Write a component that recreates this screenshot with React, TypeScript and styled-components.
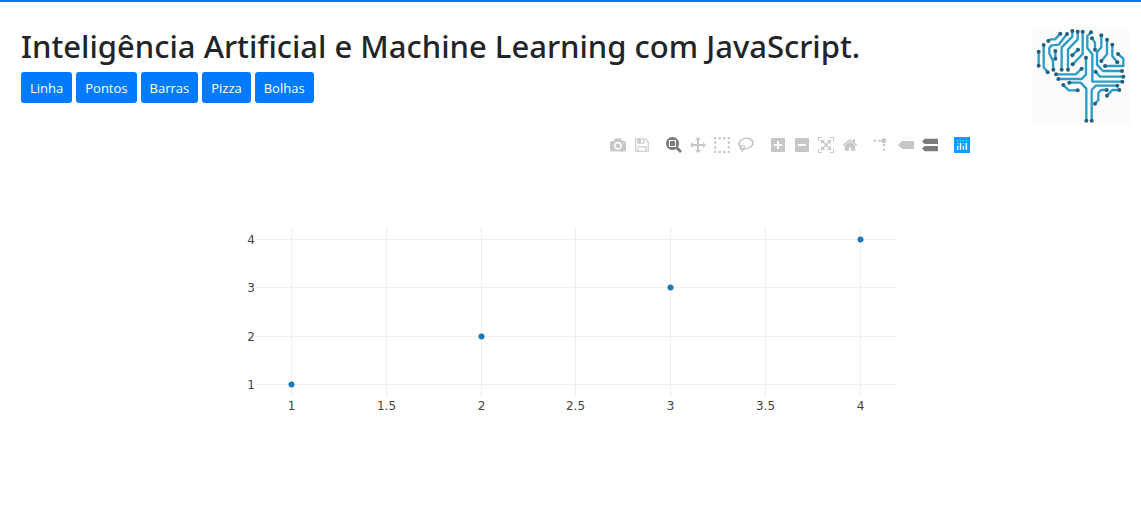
import React from "react";
import styled, { createGlobalStyle } from "styled-components";

const GlobalStyle = createGlobalStyle`
  *, *::before, *::after { box-sizing: border-box; }
  body {
    margin: 0;
    background: #fff;
    color: #212529;
    font-family: "Segoe UI", "Open Sans", "Noto Sans", sans-serif;
    font-variant-ligatures: none;
    border-top: 2px solid #007bff;
  }
`;

const Page = styled.div`
  padding: 25px 10px 0 21px;
`;

const Header = styled.header`
  display: flex;
  justify-content: space-between;
  align-items: flex-start;
  padding-right: 1px;
`;

const Title = styled.h1`
  margin: 0 0 6px;
  font-family: "Segoe UI", "Noto Sans", sans-serif;
  font-size: 31px;
  line-height: 39px;
  font-weight: 500;
`;

const ButtonRow = styled.nav`
  display: flex;
  gap: 4px;
`;

const ChartButton = styled.button`
  height: 31px;
  padding: 2px 9px 0;
  border: 0;
  border-radius: 3px;
  background: #007bff;
  color: #fff;
  font-family: inherit;
  font-size: 13px;
  line-height: 21px;
  cursor: pointer;
`;

const Logo = styled.svg`
  display: block;
  flex: none;
  width: 98px;
  height: 99px;
`;

const Figure = styled.section`
  max-width: 800px;
  margin: 8px auto 0;
`;

const ModeBar = styled.div`
  display: flex;
  justify-content: flex-end;
  gap: 8px;
  padding-right: 2px;
`;

const ModeGroup = styled.div`
  display: flex;
`;

const ModeButton = styled.button<{ $active?: boolean }>`
  display: flex;
  padding: 3px 4px;
  border: 0;
  background: transparent;
  color: ${(p) => (p.$active ? "#7b7b7e" : "#c7c7c7")};
  cursor: pointer;
`;

const Icon = styled.svg`
  display: block;
  width: 16px;
  height: 16px;
  fill: currentColor;
`;

const Plot = styled.svg`
  display: block;
  width: 100%;
  height: auto;
  text {
    font-family: Verdana, "DejaVu Sans", sans-serif;
    font-size: 12px;
    fill: #444;
  }
`;

type Glyph = { label: string; path: string; w?: number; active?: boolean; transform?: string };

const groups: Glyph[][] = [
  [
    {
      label: "Download plot as a png",
      path: "m500 450c-83 0-150-67-150-150 0-83 67-150 150-150 83 0 150 67 150 150 0 83-67 150-150 150z m400 150h-120c-16 0-34 13-39 29l-31 93c-6 15-23 28-40 28h-340c-16 0-34-13-39-28l-31-94c-6-15-23-28-40-28h-120c-55 0-100-45-100-100v-450c0-55 45-100 100-100h800c55 0 100 45 100 100v450c0 55-45 100-100 100z m-400-550c-138 0-250 112-250 250 0 138 112 250 250 250 138 0 250-112 250-250 0-138-112-250-250-250z m365 380c-19 0-35 16-35 35 0 19 16 35 35 35 19 0 35-16 35-35 0-19-16-35-35-35z",
    },
    {
      label: "Edit in Chart Studio",
      w: 857,
      path: "m214-7h429v214h-429v-214z m500 0h72v500q0 8-6 21t-11 20l-157 156q-5 6-19 12t-22 5v-232q0-22-15-38t-38-16h-322q-22 0-37 16t-16 38v232h-72v-714h72v232q0 22 16 38t37 16h465q22 0 38-16t15-38v-232z m-214 518v178q0 8-5 13t-13 5h-107q-7 0-13-5t-5-13v-178q0-8 5-13t13-5h107q7 0 13 5t5 13z m357-18v-518q0-22-15-38t-38-16h-750q-23 0-38 16t-16 38v750q0 22 16 38t38 16h517q23 0 50-12t42-26l156-157q16-15 27-42t11-49z",
    },
  ],
  [
    {
      label: "Zoom",
      active: true,
      path: "m1000-25l-250 251c40 63 63 138 63 218 0 224-182 406-407 406-224 0-406-182-406-406s183-406 407-406c80 0 155 22 218 62l250-250 125 125z m-812 250l0 438 437 0 0-438-437 0z m62 375l313 0 0-312-313 0 0 312z",
    },
    {
      label: "Pan",
      path: "m1000 350l-187 188 0-125-250 0 0 250 125 0-188 187-187-187 125 0 0-250-250 0 0 125-188-188 186-187 0 125 252 0 0-250-125 0 187-188 188 188-125 0 0 250 250 0 0-126 187 188z",
    },
    {
      label: "Box Select",
      path: "m0 850l0-143 143 0 0 143-143 0z m286 0l0-143 143 0 0 143-143 0z m285 0l0-143 143 0 0 143-143 0z m286 0l0-143 143 0 0 143-143 0z m-857-286l0-143 143 0 0 143-143 0z m857 0l0-143 143 0 0 143-143 0z m-857-285l0-143 143 0 0 143-143 0z m857 0l0-143 143 0 0 143-143 0z m-857-286l0-143 143 0 0 143-143 0z m286 0l0-143 143 0 0 143-143 0z m285 0l0-143 143 0 0 143-143 0z m286 0l0-143 143 0 0 143-143 0z",
    },
    {
      label: "Lasso Select",
      w: 1031,
      path: "m1018 538c-36 207-290 336-568 286-277-48-473-256-436-463 10-57 36-108 76-151-13-66 11-137 68-183 34-28 75-41 114-42l-55-70 0 0c-2-1-3-2-4-3-10-14-8-34 5-45 14-11 34-8 45 4 1 1 2 3 2 5l0 0 113 140c16 11 31 24 45 40 4 3 6 7 8 11 48-3 100 0 151 9 278 48 473 255 436 462z m-624-379c-80 14-149 48-197 96 42 42 109 47 156 9 33-26 47-66 41-105z m-187-74c-19 16-33 37-39 60 50-32 109-55 174-68-42-25-95-24-135 8z m360 75c-34-7-69-9-102-8 8 62-16 128-68 170-73 59-175 54-244-5-9 20-16 40-20 61-28 159 121 317 333 354s407-60 434-217c28-159-121-318-333-355z",
    },
  ],
  [
    {
      label: "Zoom in",
      w: 875,
      path: "m1 787l0-875 875 0 0 875-875 0z m687-500l-187 0 0-187-125 0 0 187-188 0 0 125 188 0 0 187 125 0 0-187 187 0 0-125z",
    },
    {
      label: "Zoom out",
      w: 875,
      path: "m0 788l0-876 875 0 0 876-875 0z m688-500l-500 0 0 125 500 0 0-125z",
    },
    {
      label: "Autoscale",
      path: "m250 850l-187 0-63 0 0-62 0-188 63 0 0 188 187 0 0 62z m688 0l-188 0 0-62 188 0 0-188 62 0 0 188 0 62-62 0z m-875-938l0 188-63 0 0-188 0-62 63 0 187 0 0 62-187 0z m875 188l0-188-188 0 0-62 188 0 62 0 0 62 0 188-62 0z m-125 188l-1 0-93-94-156 156 156 156 92-93 2 0 0 250-250 0 0-2 93-92-156-156-156 156 94 92 0 2-250 0 0-250 0 0 93 93 157-156-157-156-93 94 0 0 0-250 250 0 0 0-94 93 156 157 156-157-93-93 0 0 250 0 0 250z",
    },
    {
      label: "Reset axes",
      w: 928,
      path: "m786 296v-267q0-15-11-26t-25-10h-214v214h-143v-214h-214q-15 0-25 10t-11 26v267q0 1 0 2t0 2l321 264 321-264q1-1 1-4z m124 39l-34-41q-5-5-12-6h-2q-7 0-12 3l-386 322-386-322q-7-4-13-4-7 2-12 7l-35 41q-4 5-3 13t6 12l401 334q18 15 42 15t43-15l136-114v109q0 8 5 13t13 5h107q8 0 13-5t5-13v-227l122-102q5-5 6-12t-4-13z",
    },
  ],
  [
    {
      label: "Toggle Spike Lines",
      transform: "matrix(1.5 0 0 -1.5 0 850)",
      path: "M512 409c0-57-46-104-103-104-57 0-104 47-104 104 0 57 47 103 104 103 57 0 103-46 103-103z m-327-39l92 0 0 92-92 0z m-185 0l92 0 0 92-92 0z m370-186l92 0 0 93-92 0z m0-184l92 0 0 92-92 0z",
    },
    {
      label: "Show closest data on hover",
      w: 1500,
      path: "m375 725l0 0-375-375 375-374 0-1 1125 0 0 750-1125 0z",
    },
    {
      label: "Compare data on hover",
      w: 1125,
      active: true,
      path: "m187 786l0 2-187-188 188-187 0 0 937 0 0 373-938 0z m0-499l0 1-187-188 188-188 0 0 937 0 0 376-938-1z",
    },
  ],
];

// Circuit lines of the brain; each one starts and ends at a round node.
const traces = [
  "41,95 41,137",
  "56,75 56,142 68,157",
  "70,63 76,58 90,58 106,41",
  "126,42 101,74 80,76 73,84 73,100 84,124 85,149",
  "91,93 91,116",
  "142,33 142,50 110,82 110,149",
  "158,35 158,58 129,88 129,149",
  "159,89 142,106",
  "173,35 173,102 143,133",
  "198,37 187,48 187,84 202,103 202,185 292,185",
  "201,55 210,68 210,89",
  "229,46 229,82 216,97 216,134 234,153 291,153",
  "246,59 246,103 229,123",
  "262,74 262,108 277,127",
  "279,102 295,116 295,138 240,138",
  "212,155 225,170 295,170",
  "183,113 183,163 170,177 100,177",
  "170,146 152,163 93,163",
  "115,195 131,211 158,211",
  "133,188 167,188 184,206 184,302",
  "277,197 212,197 200,210 200,302",
  "283,210 262,210 246,227",
  "245,210 228,210 220,219 220,240 210,251",
];

const BrainLogo = () => (
  <Logo viewBox="21 21 294 297" role="img" aria-label="Cérebro eletrônico">
    <defs>
      <pattern id="hatch" width="12" height="12" patternUnits="userSpaceOnUse">
        <path d="M-3 3L3-3M0 12L12 0M9 15L15 9" stroke="#f6f6f6" strokeWidth="2" />
      </pattern>
    </defs>
    <rect x="21" y="21" width="294" height="297" fill="#fdfdfd" />
    <rect x="21" y="21" width="294" height="297" fill="url(#hatch)" />
    {traces.map((t) => (
      <polyline key={t} points={t} fill="none" stroke="#2b9cc6" strokeWidth="7" strokeLinejoin="round" />
    ))}
    {traces.map((t) => {
      const pts = t.split(" ").map((p) => p.split(",").map(Number));
      return [pts[0], pts[pts.length - 1]].map(([x, y]) => (
        <circle key={`${x}-${y}`} cx={x} cy={y} r="6" fill="#23607f" />
      ));
    })}
  </Logo>
);

const points = [1, 2, 3, 4];
const xTicks = [1, 1.5, 2, 2.5, 3, 3.5, 4];
const xAt = (v: number) => Math.round(115.9 + (v - 1) * 189.6);
const yAt = (v: number) => Math.round(229.2 - (v - 1) * 48.5);

const ScatterPlot = () => (
  <Plot viewBox="0 0 800 321" role="img" aria-label="Gráfico de pontos">
    {xTicks.map((v) => (
      <g key={v}>
        <rect x={xAt(v) - 1} y="71" width="1" height="170" fill="#eee" />
        <text x={xAt(v) - 0.5} y="254" textAnchor="middle">{v}</text>
      </g>
    ))}
    {points.map((v) => (
      <g key={v}>
        <rect x="80" y={yAt(v) - 1} width="640" height="1" fill="#eee" />
        <text x="79" y={yAt(v) + 4} textAnchor="end">{v}</text>
      </g>
    ))}
    {points.map((v) => (
      <circle key={v} cx={xAt(v) - 0.5} cy={yAt(v) - 0.5} r="3" fill="#1f77b4" />
    ))}
  </Plot>
);

const charts = ["Linha", "Pontos", "Barras", "Pizza", "Bolhas"];

export default function App() {
  return (
    <>
      <GlobalStyle />
      <Page>
        <Header>
          <div>
            <Title>Inteligência Artificial e Machine Learning com JavaScript.</Title>
            <ButtonRow>
              {charts.map((c) => (
                <ChartButton key={c} type="button">{c}</ChartButton>
              ))}
            </ButtonRow>
          </div>
          <BrainLogo />
        </Header>
        <Figure>
          <ModeBar>
            {groups.map((g, i) => (
              <ModeGroup key={i}>
                {g.map((b) => (
                  <ModeButton key={b.label} type="button" aria-label={b.label} $active={b.active}>
                    <Icon viewBox={`0 0 ${b.w ?? 1000} 1000`}>
                      <path d={b.path} transform={b.transform ?? "matrix(1 0 0 -1 0 850)"} />
                    </Icon>
                  </ModeButton>
                ))}
              </ModeGroup>
            ))}
            <ModeGroup>
              <ModeButton type="button" aria-label="Produced with Plotly">
                <Icon viewBox="0 0 132 132">
                  <rect width="132" height="132" fill="#119dff" />
                  <g fill="#25fefd">
                    {[[30, 30], [54, 30], [78, 30], [102, 30], [30, 54], [78, 54]].map(([x, y]) => (
                      <circle key={`${x}-${y}`} cx={x} cy={y} r="6" />
                    ))}
                  </g>
                  <g fill="#fff">
                    <rect x="24" y="72" width="12" height="36" rx="6" />
                    <rect x="48" y="48" width="12" height="60" rx="6" />
                    <rect x="72" y="72" width="12" height="36" rx="6" />
                    <rect x="96" y="48" width="12" height="60" rx="6" />
                  </g>
                </Icon>
              </ModeButton>
            </ModeGroup>
          </ModeBar>
          <ScatterPlot />
        </Figure>
      </Page>
    </>
  );
}
